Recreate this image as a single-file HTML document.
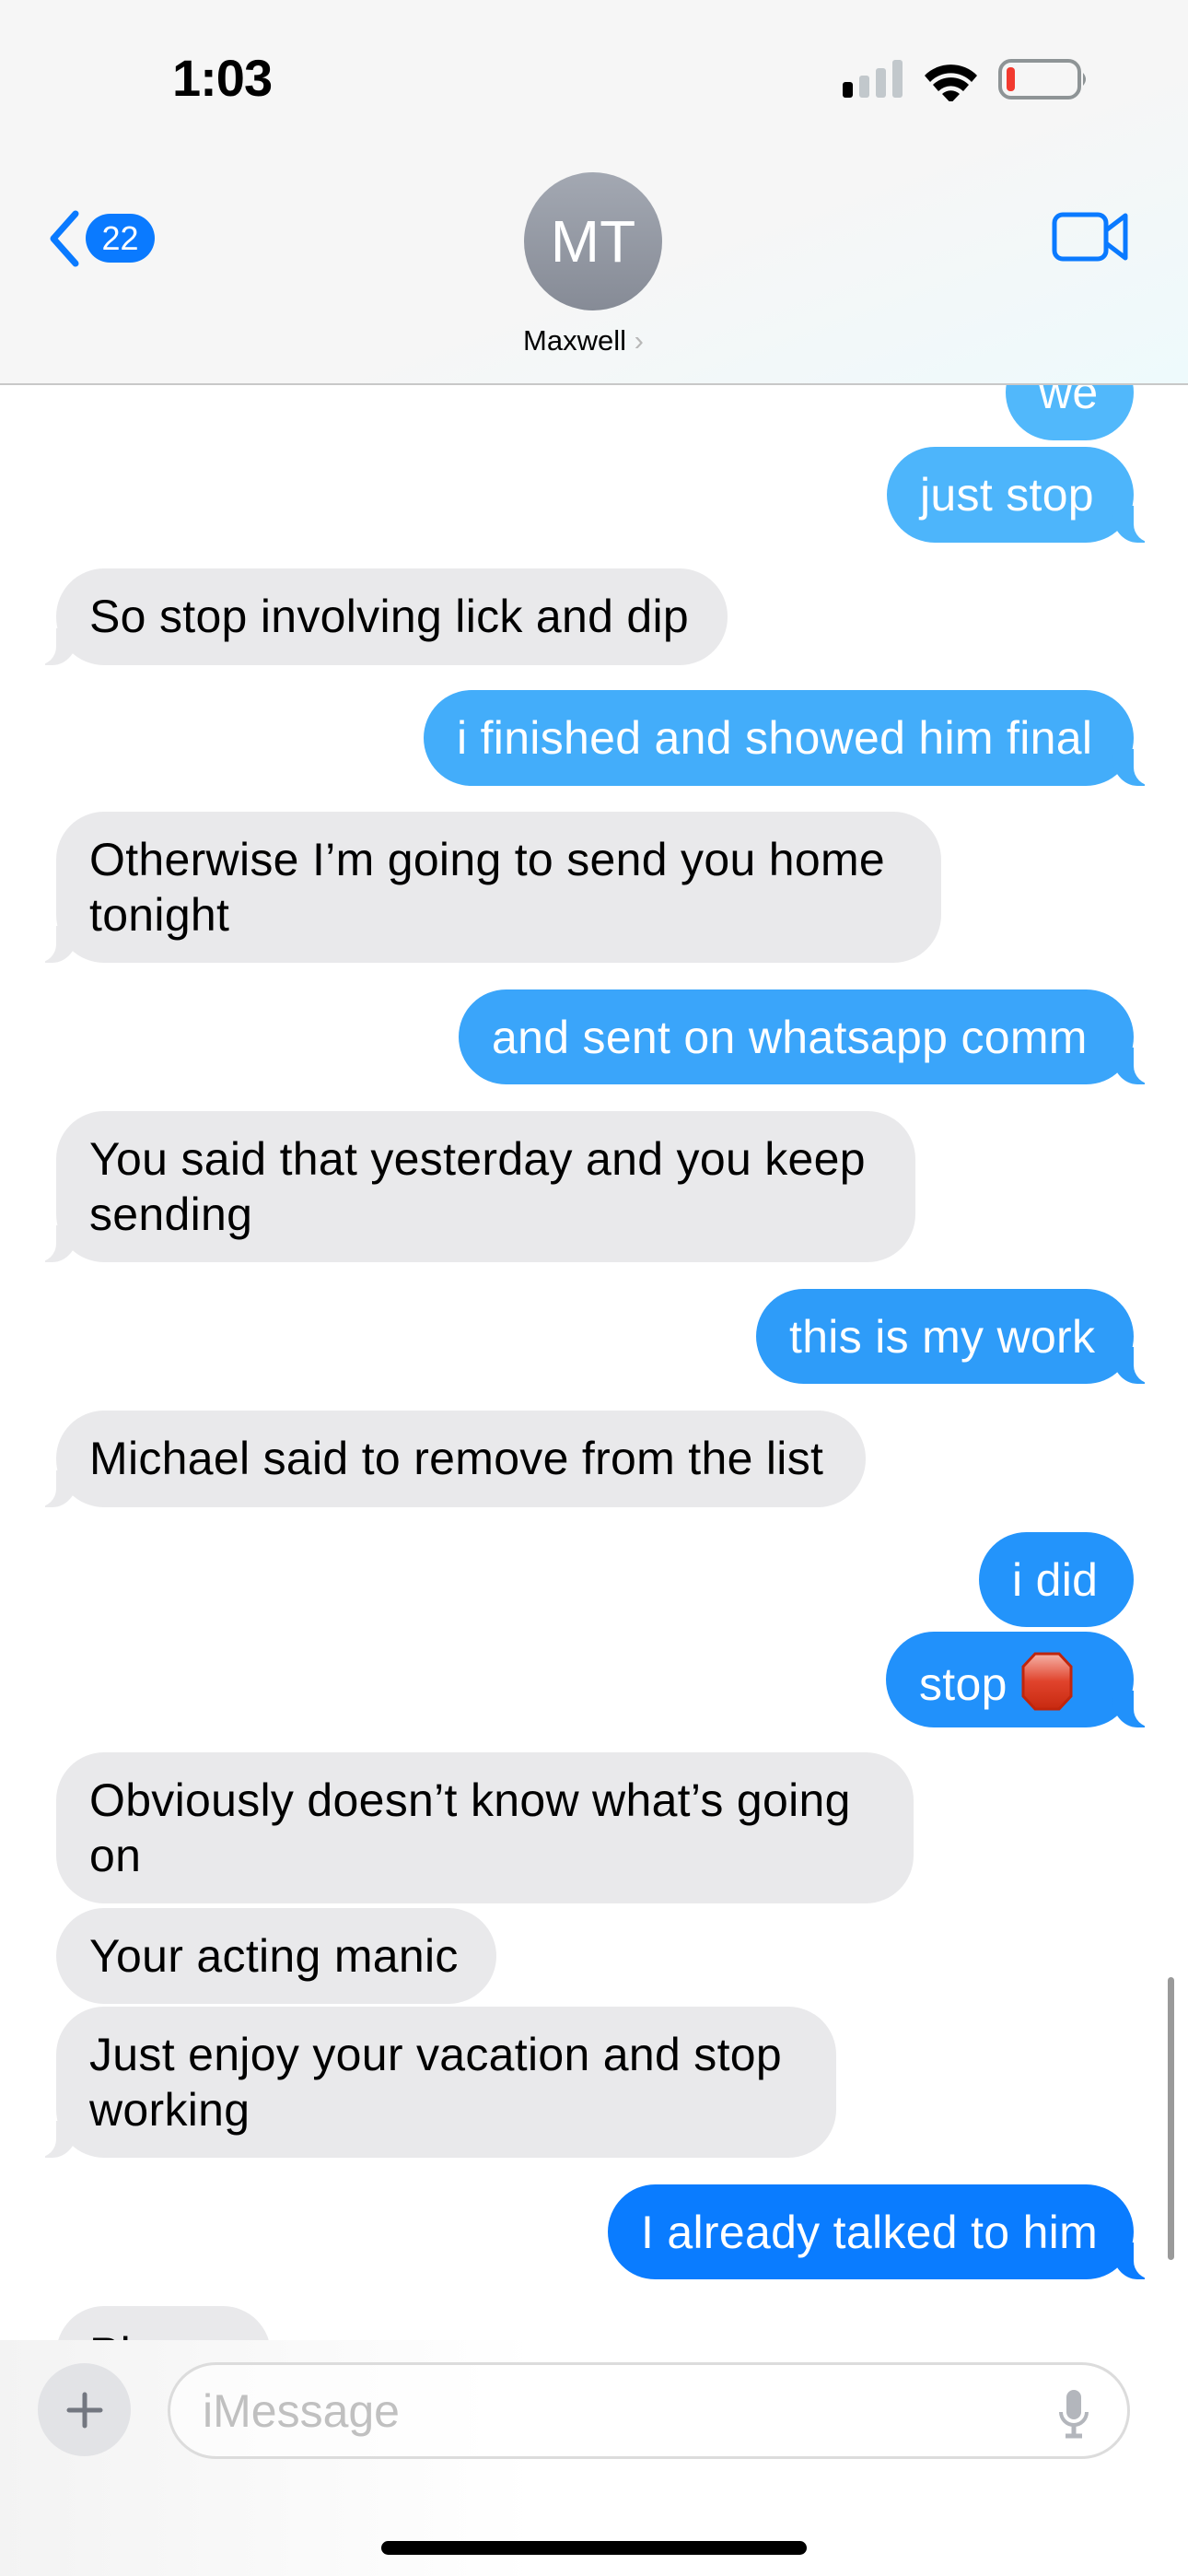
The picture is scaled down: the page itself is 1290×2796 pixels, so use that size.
<!DOCTYPE html>
<html><head><meta charset="utf-8"><style>
*{margin:0;padding:0;box-sizing:border-box}
body{width:1290px;height:2796px;position:relative;overflow:hidden;background:#fff;font-family:"Liberation Sans",sans-serif}
.b{position:absolute;border-radius:52px;font-size:50px;line-height:60px;padding:22px 0 0 36px;white-space:nowrap;letter-spacing:0.3px}
.s{color:#fff;right:59px}
.r{background:#e9e9eb;color:#000;left:61px}
.t.s::before{content:"";position:absolute;right:-12px;bottom:0;width:36px;height:40px;background:inherit;border-bottom-left-radius:28px 34px;z-index:-1}
.t.s::after{content:"";position:absolute;right:-36px;bottom:0;width:36px;height:42px;background:#fff;border-bottom-left-radius:20px;z-index:-1}
.t.r::before{content:"";position:absolute;left:-12px;bottom:0;width:36px;height:40px;background:#e9e9eb;border-bottom-right-radius:28px 34px;z-index:-1}
.t.r::after{content:"";position:absolute;left:-36px;bottom:0;width:36px;height:42px;background:#fff;border-bottom-right-radius:20px;z-index:-1}
.b{z-index:1}
.hdr{position:absolute;left:0;top:0;width:1290px;height:418px;background:linear-gradient(160deg,#f6f6f6 60%,#eefafc 100%);border-bottom:2px solid #c8c8c8;z-index:5}
.bot{position:absolute;left:0;top:2540px;width:1290px;height:256px;background:linear-gradient(90deg,#f3f3f3 0%,#fbfbfb 30%,#fff 45%);z-index:5}
</style></head><body>
<div class="hdr">
<div style="position:absolute;left:187px;top:52px;font-size:56px;font-weight:bold;letter-spacing:-1px">1:03</div>
<svg style="position:absolute;left:912px;top:62px" width="270" height="48" viewBox="0 0 270 48">
<rect x="3" y="27" width="11" height="17" rx="3" fill="#000"/>
<rect x="21" y="20" width="11" height="24" rx="3" fill="#c2c8cc"/>
<rect x="39" y="12" width="11" height="32" rx="3" fill="#c2c8cc"/>
<rect x="57" y="3" width="11" height="41" rx="3" fill="#c2c8cc"/>
<path d="M92 20 A40 40 0 0 1 149 20 L143 27 A31 31 0 0 0 98 27Z" fill="#000"/>
<path d="M101 30 A28 28 0 0 1 140 30 L134 37 A19 19 0 0 0 107 37Z" fill="#000"/>
<path d="M111 40 A14 14 0 0 1 130 40 L120.5 50Z" fill="#000"/>
<rect x="174" y="4" width="86" height="40" rx="12" fill="none" stroke="#8e9496" stroke-width="4"/>
<rect x="181" y="11" width="9" height="26" rx="4" fill="#f23a2f"/>
<path d="M264 17 q6 7 0 14z" fill="#8e9496"/>
</svg>
<svg style="position:absolute;left:48px;top:226px" width="44" height="66" viewBox="0 0 44 66"><path d="M34 6 L10 33 L34 60" stroke="#0a7aff" stroke-width="7" fill="none" stroke-linecap="round" stroke-linejoin="round"/></svg>
<div style="position:absolute;left:93px;top:232px;width:75px;height:53px;border-radius:27px;background:#0a7aff;color:#fff;font-size:36px;line-height:53px;text-align:center">22</div>
<div style="position:absolute;left:569px;top:187px;width:150px;height:150px;border-radius:50%;background:linear-gradient(#a3a8b2,#868b96);color:#fff;font-size:64px;line-height:150px;text-align:center">MT</div>
<div style="position:absolute;left:568px;top:352px;font-size:31px;color:#000">Maxwell <span style="color:#b8b8b8">›</span></div>
<svg style="position:absolute;left:1140px;top:228px" width="88" height="58" viewBox="0 0 88 58"><rect x="5" y="5" width="56" height="48" rx="9" fill="none" stroke="#0a7aff" stroke-width="5"/><path d="M61 22 L82 6 V52 L61 36" fill="none" stroke="#0a7aff" stroke-width="5" stroke-linejoin="round"/></svg>
</div>

<div class="b s" style="top:374px;width:139px;height:104px;background:#51b8fb">we</div>
<div class="b s t" style="top:485px;width:268px;height:104px;background:#4db5fb">just stop</div>
<div class="b r t" style="top:617px;width:729px;height:105px">So stop involving lick and dip</div>
<div class="b s t" style="top:749px;width:771px;height:104px;background:#43adfa">i finished and showed him final</div>
<div class="b r t" style="top:881px;width:961px;height:164px">Otherwise I’m going to send you home<br>tonight</div>
<div class="b s t" style="top:1074px;width:733px;height:103px;background:#3aa5fa">and sent on whatsapp comm</div>
<div class="b r t" style="top:1206px;width:933px;height:164px">You said that yesterday and you keep<br>sending</div>
<div class="b s t" style="top:1399px;width:410px;height:103px;background:#2e9cf9">this is my work</div>
<div class="b r t" style="top:1531px;width:879px;height:105px">Michael said to remove from the list</div>
<div class="b s" style="top:1663px;width:168px;height:103px;background:#2394fb">i did</div>
<div class="b s t" style="top:1771px;width:269px;height:104px;background:#2191fb">stop <svg width="58" height="64" viewBox="0 0 58 64" style="vertical-align:-12px"><defs><linearGradient id="g" x1="0" y1="0" x2="0" y2="1"><stop offset="0" stop-color="#f6b3a8"/><stop offset=".5" stop-color="#e0432c"/><stop offset="1" stop-color="#c82a10"/></linearGradient></defs><polygon points="16,2 42,2 55,16 55,48 42,62 16,62 3,48 3,16" fill="url(#g)" stroke="#c0250c" stroke-width="3"/></svg></div>
<div class="b r" style="top:1902px;width:931px;height:164px">Obviously doesn’t know what’s going<br>on</div>
<div class="b r" style="top:2071px;width:478px;height:104px">Your acting manic</div>
<div class="b r t" style="top:2178px;width:847px;height:164px">Just enjoy your vacation and stop<br>working</div>
<div class="b s t" style="top:2371px;width:571px;height:103px;background:#0a7cff">I already talked to him</div>
<div class="b r" style="top:2503px;width:233px;height:104px">Pl</div>
<div style="position:absolute;left:1268px;top:2146px;width:7px;height:307px;border-radius:4px;background:#9a9a9a;z-index:2"></div>

<div class="bot">
<div style="position:absolute;left:41px;top:25px;width:101px;height:101px;border-radius:50%;background:#e2e3e6"></div>
<svg style="position:absolute;left:71px;top:55px" width="42" height="42" viewBox="0 0 42 42"><path d="M21 4V38M4 21H38" stroke="#737780" stroke-width="5" stroke-linecap="round"/></svg>
<div style="position:absolute;left:182px;top:24px;width:1045px;height:105px;border-radius:53px;border:3px solid #dcdcdc;background:rgba(255,255,255,.6)"></div>
<div style="position:absolute;left:220px;top:48px;font-size:50px;color:#c0c0c0">iMessage</div>
<svg style="position:absolute;left:1148px;top:52px" width="36" height="58" viewBox="0 0 36 58"><rect x="10" y="2" width="16" height="32" rx="8" fill="#b3b6bc"/><path d="M4 26 a14 14 0 0 0 28 0" fill="none" stroke="#b3b6bc" stroke-width="4"/><path d="M18 40V50M9 52H27" stroke="#b3b6bc" stroke-width="5"/></svg>
<div style="position:absolute;left:414px;top:218px;width:462px;height:15px;border-radius:8px;background:#000"></div>
</div>
</body></html>
